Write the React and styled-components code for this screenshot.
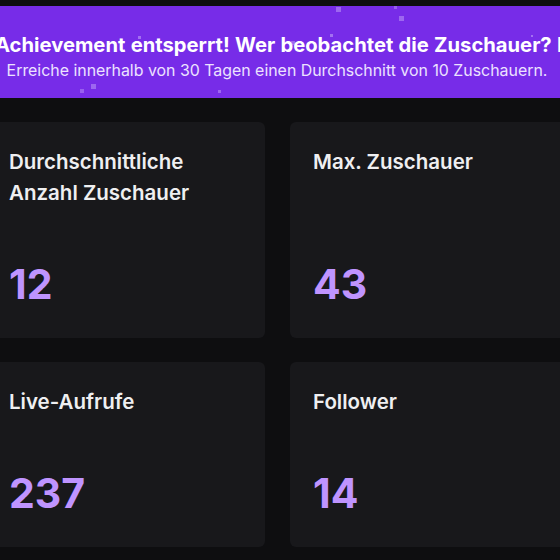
import styled, { createGlobalStyle } from "styled-components";

const GlobalStyle = createGlobalStyle`
  html, body {
    margin: 0;
    padding: 0;
    background: #0e0e10;
    overflow: hidden;
    font-family: Inter, "Noto Sans", "Liberation Sans", sans-serif;
  }
`;

const stats = [
  { label: "Durchschnittliche Anzahl Zuschauer", value: 12, wrap: true },
  { label: "Max. Zuschauer", value: 43 },
  { label: "Live-Aufrufe", value: 237 },
  { label: "Follower", value: 14 },
];

// kleine Konfetti-Pixel im Banner
const confetti = [
  { x: 91, y: 84, s: 5, o: 0.35 },
  { x: 80, y: 89, s: 4, o: 0.3 },
  { x: 218, y: 90, s: 3, o: 0.35 },
  { x: 399, y: 16, s: 5, o: 0.35 },
  { x: 394, y: 6, s: 3, o: 0.3 },
  { x: 336, y: 7, s: 5, o: 0.35 },
  { x: 330, y: 34, s: 3, o: 0.4 },
  { x: 291, y: 41, s: 4, o: 0.35 },
  { x: 421, y: 43, s: 3, o: 0.35 },
  { x: 138, y: 36, s: 3, o: 0.4 },
  { x: 531, y: 35, s: 2, o: 0.4 },
];

export default function App() {
  return (
    <>
      <GlobalStyle />
      <Page>
        <Banner>
          {confetti.map((c, i) => (
            <Pixel
              key={i}
              style={{ left: c.x, top: c.y - 6, width: c.s, height: c.s, opacity: c.o }}
            />
          ))}
          <Title>Achievement entsperrt! Wer beobachtet die Zuschauer? Beobachter</Title>
          <Subtitle>
            Erreiche innerhalb von 30 Tagen einen Durchschnitt von 10 Zuschauern.
          </Subtitle>
        </Banner>

        <Grid>
          {stats.map((s) => (
            <Card key={s.label}>
              <Label $wrap={s.wrap}>{s.label}</Label>
              <Value>{s.value}</Value>
            </Card>
          ))}
        </Grid>
      </Page>
    </>
  );
}

/* ====== STYLES ====== */
const Page = styled.main`
  padding-top: 6px;
  background: #0e0e10;
  min-height: 560px;
  box-sizing: border-box;
`;

const Banner = styled.section`
  position: relative;
  height: 92px;
  background: #772ce8;
  display: flex;
  flex-direction: column;
  justify-content: center;
  gap: 3px;
  overflow: hidden;
  padding-top: 8px;
  box-sizing: border-box;
`;

const Pixel = styled.span`
  position: absolute;
  background: #e6d6ff;
`;

const Title = styled.h2`
  margin: 0 0 0 -5px;
  white-space: nowrap;
  font-size: 20.2px;
  line-height: 26px;
  font-weight: 700;
  word-spacing: 0.5px;
  color: #ffffff;
`;

const Subtitle = styled.p`
  margin: 0;
  white-space: nowrap;
  text-align: center;
  font-size: 15.9px;
  line-height: 20px;
  color: #ece2ff;
  padding-right: 6px;
`;

const Grid = styled.div`
  display: grid;
  grid-template-columns: 279px 279px;
  gap: 24px 25px;
  margin: 24px 0 0 -14px;
  width: 583px;
`;

const Card = styled.div`
  background: #18181b;
  border-radius: 6px;
  padding: 24px 23px 29px;
  display: flex;
  flex-direction: column;
`;

const Label = styled.div`
  font-size: 20.5px;
  line-height: 31px;
  font-weight: 600;
  color: #efeff1;
  margin-bottom: 51px;
  max-width: ${({ $wrap }) => ($wrap ? "220px" : "none")};
`;

const Value = styled.div`
  margin-top: auto;
  font-size: 41px;
  line-height: 50px;
  font-weight: 700;
  color: #bf94ff;
`;
